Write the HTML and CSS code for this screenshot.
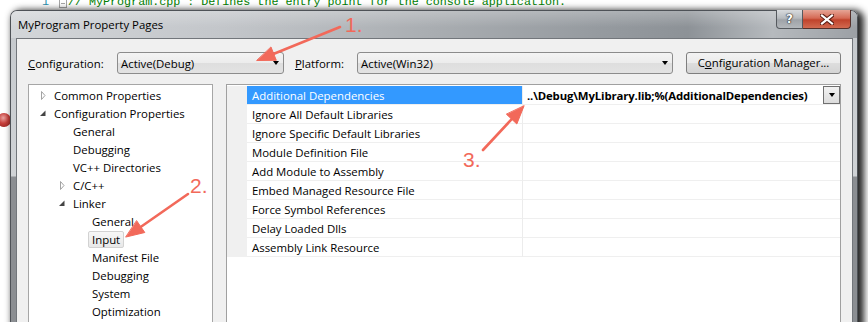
FILE: index.html
```html
<!DOCTYPE html>
<html lang="en">

<head>
    <meta charset="UTF-8">
    <title>MyProgram Property Pages</title>
    <link rel="stylesheet" href="styles.css">
</head>

<body>
    <div class="code">
        <div class="code-line">
            <span class="ln">1</span>
            <span class="fold"></span>
            <span class="comment">// MyProgram.cpp : Defines the entry point for the console application.</span>
        </div>
    </div>

    <div class="desk">
        <div class="gutter">
            <div class="bp"></div>
        </div>

        <div class="window">
            <div class="titlebar">
                <div class="title">MyProgram Property Pages</div>
                <div class="caption">
                    <div class="cap-help">?</div>
                    <div class="cap-close">
                        <svg width="14" height="11" viewBox="0 0 14 11">
                            <path d="M2 1.5 L12 9.5 M12 1.5 L2 9.5" stroke="#5a1c12" stroke-width="4.2" stroke-linecap="square" />
                            <path d="M2 1.5 L12 9.5 M12 1.5 L2 9.5" stroke="#fff" stroke-width="2.2" stroke-linecap="square" />
                        </svg>
                    </div>
                </div>
            </div>

            <div class="client">
                <div class="config-row">
                    <label class="lbl lbl-config"><u>C</u>onfiguration:</label>
                    <div class="combo combo-config">
                        <span>Active(Debug)</span>
                        <span class="combo-arrow"></span>
                    </div>
                    <label class="lbl lbl-platform"><u>P</u>latform:</label>
                    <div class="combo combo-platform">
                        <span>Active(Win32)</span>
                        <span class="combo-arrow"></span>
                    </div>
                    <div class="btn">C<u>o</u>nfiguration Manager...</div>
                </div>

                <div class="panels">
                    <!-- tree on the left -->
                    <ul class="tree">
                        <li class="node lv0"><span class="exp"><svg width="12" height="18"><polygon points="4.5,5.5 8,9.5 4.5,13.5" fill="none" stroke="#a3a3a3" /></svg></span>Common Properties</li>
                        <li class="node lv0"><span class="exp"><svg width="12" height="18"><polygon points="8.5,6.5 8.5,12 3,12" fill="#444" /></svg></span>Configuration Properties</li>
                        <li class="node lv1"><span class="exp"></span>General</li>
                        <li class="node lv1"><span class="exp"></span>Debugging</li>
                        <li class="node lv1"><span class="exp"></span>VC++ Directories</li>
                        <li class="node lv1"><span class="exp"><svg width="12" height="18"><polygon points="4.5,5.5 8,9.5 4.5,13.5" fill="none" stroke="#a3a3a3" /></svg></span>C/C++</li>
                        <li class="node lv1"><span class="exp"><svg width="12" height="18"><polygon points="8.5,6.5 8.5,12 3,12" fill="#444" /></svg></span>Linker</li>
                        <li class="node lv2"><span class="exp"></span>General</li>
                        <li class="node lv2"><span class="exp"></span><span class="sel">Input</span></li>
                        <li class="node lv2"><span class="exp"></span>Manifest File</li>
                        <li class="node lv2"><span class="exp"></span>Debugging</li>
                        <li class="node lv2"><span class="exp"></span>System</li>
                        <li class="node lv2"><span class="exp"></span>Optimization</li>
                    </ul>

                    <!-- property grid on the right -->
                    <div class="grid">
                        <div class="row active">
                            <div class="margin"></div>
                            <div class="name">Additional Dependencies</div>
                            <div class="value">
                                <span>..\Debug\MyLibrary.lib;%(AdditionalDependencies)</span>
                                <span class="drop"></span>
                            </div>
                        </div>
                        <div class="row">
                            <div class="margin"></div>
                            <div class="name">Ignore All Default Libraries</div>
                            <div class="value"></div>
                        </div>
                        <div class="row">
                            <div class="margin"></div>
                            <div class="name">Ignore Specific Default Libraries</div>
                            <div class="value"></div>
                        </div>
                        <div class="row">
                            <div class="margin"></div>
                            <div class="name">Module Definition File</div>
                            <div class="value"></div>
                        </div>
                        <div class="row">
                            <div class="margin"></div>
                            <div class="name">Add Module to Assembly</div>
                            <div class="value"></div>
                        </div>
                        <div class="row">
                            <div class="margin"></div>
                            <div class="name">Embed Managed Resource File</div>
                            <div class="value"></div>
                        </div>
                        <div class="row">
                            <div class="margin"></div>
                            <div class="name">Force Symbol References</div>
                            <div class="value"></div>
                        </div>
                        <div class="row">
                            <div class="margin"></div>
                            <div class="name">Delay Loaded Dlls</div>
                            <div class="value"></div>
                        </div>
                        <div class="row">
                            <div class="margin"></div>
                            <div class="name">Assembly Link Resource</div>
                            <div class="value"></div>
                        </div>
                    </div>
                </div>
            </div>
        </div>
    </div>

    <!-- red annotation arrows drawn over the screenshot -->
    <svg class="marks" width="868" height="322" viewBox="0 0 868 322">
        <g stroke="#f2695a" stroke-width="2.6" stroke-linecap="round" fill="#f2695a">
            <line x1="340" y1="27" x2="274" y2="53.8" />
            <polygon points="257,60.5 276.3,60.3 271.1,47.3" stroke-width="1" stroke-linejoin="round" />
            <line x1="188" y1="194" x2="141" y2="226.7" />
            <polygon points="126,237 144.8,232.5 136.8,220.9" stroke-width="1" stroke-linejoin="round" />
            <line x1="483" y1="150" x2="511.7" y2="119.2" />
            <polygon points="524,106 516.8,124 506.6,114.4" stroke-width="1" stroke-linejoin="round" />
        </g>
        <text class="num" x="345" y="31.5">1.</text>
        <text class="num" x="190" y="193">2.</text>
        <text class="num" x="463" y="167">3.</text>
    </svg>
</body>

</html>
```

FILE: styles.css
```css
* {
    margin: 0;
    padding: 0;
    list-style: none;
    box-sizing: border-box;
}

body {
    width: 868px;
    height: 322px;
    overflow: hidden;
    position: relative;
    background: #fff;
    color: #000;
    font-family: "Open Sans", "Noto Sans", sans-serif;
    font-size: 11.4px;
}

/* editor line behind the dialog */
.code {
    height: 10px;
    overflow: hidden;
    padding-left: 42px;
    font-family: "Liberation Mono", monospace;
    font-size: 11.7px;
    white-space: nowrap;
}

.code-line {
    display: flex;
    align-items: center;
    height: 14px;
    margin-top: -5px;
}

.ln {
    width: 17px;
    color: #2b91af;
}

.fold {
    width: 8px;
    height: 9px;
    margin-top: 2px;
    border: 1px solid #a5a5a5;
    background: linear-gradient(#a5a5a5, #a5a5a5) center / 4px 1px no-repeat;
}

.comment {
    margin-left: 1px;
    color: #008000;
}

.desk {
    display: flex;
}

.gutter {
    width: 10px;
    overflow: hidden;
    padding-top: 103px;
}

.bp {
    width: 14px;
    height: 14px;
    margin-left: -3px;
    border-radius: 50%;
    background: radial-gradient(circle at 45% 35%, #e9a3a0 0, #c8403c 45%, #8e1f1c 100%);
}

/* dialog window */
.window {
    width: 848px;
    height: 330px;
    padding: 0 4px 0 5px;
    border: 1px solid #4e5257;
    border-bottom: none;
    border-radius: 7px 7px 0 0;
    background: linear-gradient(180deg, #c4c8cc 0, #d0d3d6 165px, #8b8e92 166px, #8b8e92 100%);
    box-shadow: 4px 2px 7px 2px rgba(0, 0, 0, .85);
}

.titlebar {
    display: flex;
    height: 27px;
    margin: 0 -4px 0 -5px;
    padding: 0 5px 0 6px;
    border-radius: 6px 6px 0 0;
    background:
        linear-gradient(180deg, rgba(255, 255, 255, .25), rgba(255, 255, 255, 0) 60%),
        linear-gradient(90deg, #d3d6d9 0, #c3c6ca 25%, #a9adb1 50%, #959a9f 70%, #8d9297 80%, #b6babe 90%, #9ca0a5 100%);
}

.title {
    line-height: 27px;
    padding-left: 1px;
}

.caption {
    display: flex;
    height: 19px;
    margin: -1px 1px 0 auto;
}

.cap-help {
    width: 27px;
    border: 1px solid #55595e;
    border-top: none;
    border-radius: 0 0 0 4px;
    background: linear-gradient(180deg, #d8dbde 0, #b7bbbf 45%, #9fa3a8 55%, #b3b7bb 100%);
    color: #fff;
    font-family: "DejaVu Sans", sans-serif;
    font-weight: bold;
    font-size: 12px;
    line-height: 18px;
    text-align: center;
    text-shadow: 0 0 1px #222, 0 0 1px #222, 0 0 2px #444;
}

.cap-close {
    display: flex;
    align-items: center;
    justify-content: center;
    width: 48px;
    border: 1px solid #55302a;
    border-left: none;
    border-top: none;
    border-radius: 0 0 4px 0;
    background: linear-gradient(180deg, #e6a596 0, #d56a55 45%, #c0432c 55%, #d26a50 100%);
}

.client {
    height: 300px;
    padding: 13px 11px 0 11px;
    border: 1px solid #72767b;
    border-bottom: none;
    background: #f0f0f0;
}

/* configuration row */
.config-row {
    display: flex;
    align-items: center;
    height: 22px;
}

.lbl-config {
    width: 89px;
}

.lbl-platform {
    width: 62px;
    margin-left: 11px;
}

.combo {
    display: flex;
    align-items: center;
    height: 22px;
    padding: 0 4px 0 3px;
    border: 1px solid #8c8c8c;
    border-radius: 3px;
    background: linear-gradient(180deg, #f4f4f4 0, #ececec 50%, #dedede 51%, #e3e3e3 100%);
}

.combo-config {
    width: 167px;
}

.combo-platform {
    width: 316px;
}

.combo-arrow {
    margin-left: auto;
    width: 0;
    height: 0;
    border-left: 3.5px solid transparent;
    border-right: 3.5px solid transparent;
    border-top: 4px solid #000;
}

.btn {
    width: 155px;
    height: 22px;
    margin-left: 13px;
    border: 1px solid #7e7e7e;
    border-radius: 3px;
    background: linear-gradient(180deg, #f3f3f3 0, #ebebeb 50%, #dddddd 51%, #d4d4d4 100%);
    line-height: 20px;
    text-align: center;
}

/* panels */
.panels {
    display: flex;
    margin-top: 10px;
}

.tree {
    width: 185px;
    height: 260px;
    padding-top: 1px;
    border: 1px solid #a6a6a6;
    background: #fff;
}

.node {
    display: flex;
    align-items: center;
    height: 18px;
    white-space: nowrap;
}

.lv0 {
    padding-left: 8px;
}

.lv1 {
    padding-left: 27px;
}

.lv2 {
    padding-left: 46px;
}

.exp {
    display: flex;
    width: 12px;
    height: 18px;
    margin-right: 5px;
}

.sel {
    margin-left: -4px;
    padding: 0 3px;
    line-height: 15px;
    border: 1px solid #d2d2d2;
    border-radius: 2px;
    background: linear-gradient(180deg, #f7f7f7, #e8e8e8);
}

.grid {
    width: 615px;
    height: 260px;
    margin-left: 13px;
    padding-top: 1px;
    border: 1px solid #a0a0a0;
    background: #fff;
}

.row {
    display: grid;
    grid-template-columns: 20px 275px 1fr;
    height: 19px;
}

.margin {
    background: #f0f0f0;
}

.name,
.value {
    display: flex;
    align-items: center;
    border-bottom: 1px solid #efefef;
    white-space: nowrap;
}

.name {
    padding-left: 5px;
}

.value {
    padding-left: 4px;
    border-left: 1px solid #ececec;
    font-weight: bold;
    letter-spacing: -0.15px;
}

.active .name {
    background: #3399ff;
    color: #fff;
}

.drop {
    display: flex;
    align-items: center;
    justify-content: center;
    width: 17px;
    height: 18px;
    margin-left: auto;
    border: 1px solid #707070;
    background: linear-gradient(180deg, #f2f2f2, #dcdcdc);
}

.drop::after {
    content: "";
    border-left: 3.5px solid transparent;
    border-right: 3.5px solid transparent;
    border-top: 4px solid #000;
}

/* annotation layer */
.marks {
    position: absolute;
    top: 0;
    left: 0;
    pointer-events: none;
}

.num {
    fill: #f2695a;
    font-family: "Liberation Sans", sans-serif;
    font-size: 21px;
}
```
